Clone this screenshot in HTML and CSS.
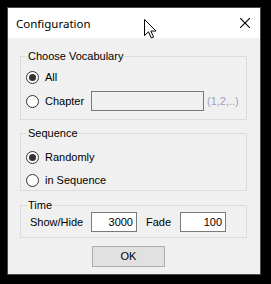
FILE: index.html
```html
<!DOCTYPE html>
<html>
<head>
<meta charset="utf-8">
<link rel="stylesheet" href="styles.css">
</head>
<body>
<div class="window">
  <div class="titlebar">
    <span class="title">Configuration</span>
    <svg class="close" width="10" height="10" viewBox="0 0 10 10"><path d="M0 0 L10 10 M10 0 L0 10" stroke="#000" stroke-width="1.1" fill="none"/></svg>
  </div>
  <div class="body">
    <div class="group g1">
      <div class="legend">Choose Vocabulary</div>
      <div class="row r-all"><span class="radio on"></span><span class="rlabel">All</span></div>
      <div class="row r-chap">
        <div class="chap"><span class="radio"></span><span class="rlabel">Chapter</span></div>
        <div class="tb disabled"></div>
        <span class="hint">(1,2,..)</span>
      </div>
    </div>
    <div class="group g2">
      <div class="legend">Sequence</div>
      <div class="row r-rand"><span class="radio on"></span><span class="rlabel">Randomly</span></div>
      <div class="row r-seq"><span class="radio"></span><span class="rlabel">in Sequence</span></div>
    </div>
    <div class="group g3">
      <div class="legend">Time</div>
      <div class="row r-time">
        <span class="lbl show">Show/Hide</span>
        <div class="tb num">3000</div>
        <span class="lbl fade">Fade</span>
        <div class="tb num">100</div>
      </div>
    </div>
    <div class="btnrow"><div class="btn">OK</div></div>
  </div>
  <svg class="cursor" width="13" height="20" viewBox="0 0 13 20"><path d="M0.5 0.5 V16.5 L4.5 12.8 L7.3 19 L9.6 18 L6.9 12 H12 Z" fill="#fff" stroke="#000" stroke-width="1" stroke-linejoin="miter"/></svg>
</div>
</body>
</html>
```
FILE: styles.css
```css
html, body { margin: 0; padding: 0; }
body {
  background: #000;
  width: 271px;
  height: 284px;
  overflow: hidden;
  font-family: "Liberation Sans", Arial, sans-serif;
  font-size: 11px;
  color: #000;
}
.window {
  position: relative;
  margin: 7px 0 0 7px;
  width: 252px;
  height: 266px;
  border: 1px solid #4a4a4a;
  background: #f0f0f0;
}
.titlebar {
  height: 30px;
  background: #fff;
  display: flex;
  align-items: center;
  justify-content: space-between;
  padding: 0 10px 0 8px;
}
.title {
  font-family: "Noto Sans", "Open Sans", sans-serif;
  font-size: 11.5px;
  color: #000;
}
.close { display: block; }
.body {
  padding: 18px 13px 0 12px;
  display: flex;
  flex-direction: column;
}
.group {
  border: 1px solid #dcdcdc;
  padding: 0 6px 0 5px;
  display: flex;
  flex-direction: column;
}
.legend {
  margin-top: -7px;
  margin-left: 1px;
  padding: 0 1px;
  height: 13px;
  line-height: 13px;
  width: fit-content;
  background: #f0f0f0;
}
.row { display: flex; align-items: center; }
.radio {
  box-sizing: border-box;
  width: 13px;
  height: 13px;
  border: 1px solid #333;
  border-radius: 50%;
  background: #fff;
  position: relative;
  flex: none;
}
.radio.on::after {
  content: "";
  position: absolute;
  left: 2px;
  top: 2px;
  width: 7px;
  height: 7px;
  border-radius: 50%;
  background: #333;
}
.rlabel { margin-left: 6px; }
.g1 { padding-bottom: 8px; }
.r-all { height: 20px; margin-top: 4px; }
.r-chap { height: 20px; margin-top: 4px; }
.chap { display: flex; align-items: center; width: 65px; }
.tb {
  box-sizing: border-box;
  height: 20px;
  border: 1px solid #7a7a7a;
  background: #fff;
}
.tb.disabled { width: 113px; background: #f0f0f0; }
.hint { margin-left: 3px; color: #9aa4b8; }
.g2 { margin-top: 13px; padding-bottom: 2px; }
.r-rand { height: 16px; margin-top: 9px; }
.r-seq { height: 16px; margin-top: 7px; }
.g3 { margin-top: 14px; padding-bottom: 5px; }
.r-time { height: 20px; padding-left: 4px; }
.lbl.show { width: 61px; }
.lbl.fade { width: 34px; margin-left: 9px; }
.tb.num {
  width: 46px;
  text-align: right;
  line-height: 18px;
  padding-right: 3px;
}
.btnrow { display: flex; padding-left: 72px; margin-top: 8px; }
.btn {
  box-sizing: border-box;
  width: 73px;
  height: 21px;
  line-height: 19px;
  text-align: center;
  border: 1px solid #adadad;
  background: #e1e1e1;
}
.cursor { position: absolute; left: 136px; top: 11px; }
```
